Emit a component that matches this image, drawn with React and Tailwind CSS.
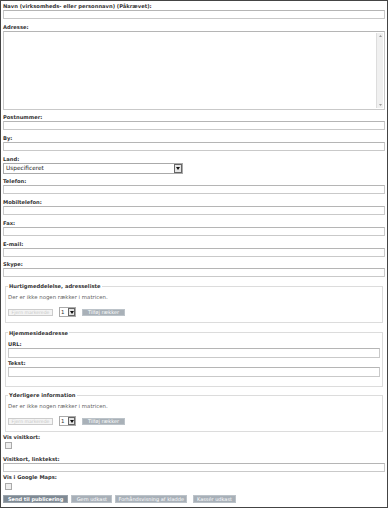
import React from 'react';

const inputCls = 'block w-full h-[9px] border border-[#c9c9c9] border-t-[#b5b5b5] bg-white';
const boldCls = 'font-bold text-[#333] whitespace-nowrap text-[5.2px]';

function Label({ children, h = 'h-[8px] leading-[8px]' }) {
  return <div className={h + ' ' + boldCls}>{children}</div>;
}

function Field({ label }) {
  return (
    <div className="mb-[3.7px]">
      <Label>{label}</Label>
      <div className={inputCls} />
    </div>
  );
}

function Arrow({ className }) {
  return (
    <div className={'flex items-center justify-center border border-[#666] bg-[#e6e6e6] ' + className}>
      <svg width="4" height="3" viewBox="0 0 4 3">
        <path d="M0 0 L4 0 L2 3 Z" fill="#111" />
      </svg>
    </div>
  );
}

function MatrixBox({ title }) {
  return (
    <fieldset className="mx-[2px] border border-[#dcdcdc] px-[2px] pb-[4.5px]">
      <legend className={'px-[1px] h-[8px] leading-[8px] ' + boldCls}>{title}</legend>
      <div className="h-[8px] leading-[8px] mt-[3px] text-[#666]">Der er ikke nogen rækker i matricen.</div>
      <div className="flex items-center mt-[6px] h-[10px]">
        <div className="h-[7px] w-[45px] border border-[#ccc] bg-[#f4f4f4] text-[#c8c8c8] leading-[5px] text-center text-[4.6px]">Fjern markerede</div>
        <div className="ml-[6px] flex h-[10px] w-[17px] border border-[#aaa] bg-white">
          <span className="flex-1 leading-[8px] pl-[1px] text-[#333]">1</span>
          <Arrow className="w-[7px] h-[8px]" />
        </div>
        <div className="ml-[6px] h-[7px] w-[43px] bg-[#a9b1b8] border border-[#bcc3c9] text-white leading-[5px] text-center text-[5px]">Tilføj rækker</div>
      </div>
    </fieldset>
  );
}

export default function App() {
  return (
    <div className="w-[388px] h-[508px] border border-[#444] bg-white px-[2px] pt-[1px] font-['DejaVu_Sans',Verdana,sans-serif] text-[5.4px] text-[#222] overflow-hidden">
      <Field label="Navn (virksomheds- eller personnavn) (Påkrævet):" />

      <div className="mb-[3.7px]">
        <Label>Adresse:</Label>
        <div className="flex h-[79px] border border-[#c9c9c9] border-t-[#b5b5b5] bg-white">
          <div className="flex-1" />
          <div className="w-[7px] flex flex-col border-l border-[#ddd] bg-[#f0f0f0] mr-[1px] my-[1px]">
            <div className="h-[6px] flex items-center justify-center">
              <svg width="3" height="2" viewBox="0 0 3 2"><path d="M0 2 L3 2 L1.5 0 Z" fill="#999" /></svg>
            </div>
            <div className="flex-1" />
            <div className="h-[6px] flex items-center justify-center">
              <svg width="3" height="2" viewBox="0 0 3 2"><path d="M0 0 L3 0 L1.5 2 Z" fill="#999" /></svg>
            </div>
          </div>
        </div>
      </div>

      <Field label="Postnummer:" />
      <Field label="By:" />

      <div className="mb-[3.7px]">
        <Label>Land:</Label>
        <div className="flex items-center h-[11px] w-[180px] border border-[#aaa] bg-white">
          <span className="flex-1 pl-[2px] text-[5.8px] leading-[9px] text-[#222]">Uspecificeret</span>
          <Arrow className="w-[8px] h-[9px]" />
        </div>
      </div>

      <Field label="Telefon:" />
      <Field label="Mobiltelefon:" />
      <Field label="Fax:" />
      <Field label="E-mail:" />
      <Field label="Skype:" />

      <div className="mt-[5px]">
        <MatrixBox title="Hurtigmeddelelse, adresseliste" />
      </div>

      <fieldset className="mt-[6px] mx-[2px] border border-[#dcdcdc] px-[2px] pb-[9px]">
        <legend className={'px-[1px] h-[8px] leading-[8px] ' + boldCls}>Hjemmesideadresse</legend>
        <div className="mt-[4.5px]">
          <Label h="h-[7px] leading-[7px]">URL:</Label>
          <div className="block w-full h-[10px] border border-[#c9c9c9] border-t-[#b5b5b5] bg-white" />
        </div>
        <div className="mt-[1.5px]">
          <Label h="h-[7px] leading-[7px]">Tekst:</Label>
          <div className="block w-full h-[10px] border border-[#c9c9c9] border-t-[#b5b5b5] bg-white" />
        </div>
      </fieldset>

      <div className="mt-[4.5px]">
        <MatrixBox title="Yderligere information" />
      </div>

      <div className="mt-[1px]">
        <Label>Vis visitkort:</Label>
        <div className="ml-[2px] mt-[1.7px] w-[7px] h-[7px] border border-[#aaa] bg-[#eee]" />
      </div>

      <div className="mt-[5.3px]">
        <Label>Visitkort, linktekst:</Label>
        <div className={inputCls + ' mt-[0.7px]'} />
      </div>

      <div className="mt-[1px]">
        <Label>Vis i Google Maps:</Label>
        <div className="ml-[2px] mt-[2px] w-[7px] h-[7px] border border-[#aaa] bg-[#eee]" />
      </div>

      <div className="flex mt-[5px] gap-[3px] text-[5px]">
        <div className="h-[8px] px-[4px] leading-[6px] bg-[#7f8a94] border border-[#9aa3ab] text-white font-bold whitespace-nowrap">Send til publicering</div>
        <div className="h-[8px] px-[4.5px] leading-[6px] bg-[#a8b0b8] border border-[#bcc3c9] text-white whitespace-nowrap">Gem udkast</div>
        <div className="h-[8px] px-[2px] leading-[6px] bg-[#a8b0b8] border border-[#bcc3c9] text-white whitespace-nowrap">Forhåndsvisning af kladde</div>
        <div className="ml-[3px] h-[8px] px-[3px] leading-[6px] bg-[#a8b0b8] border border-[#bcc3c9] text-white whitespace-nowrap">Kassér udkast</div>
      </div>
    </div>
  );
}
